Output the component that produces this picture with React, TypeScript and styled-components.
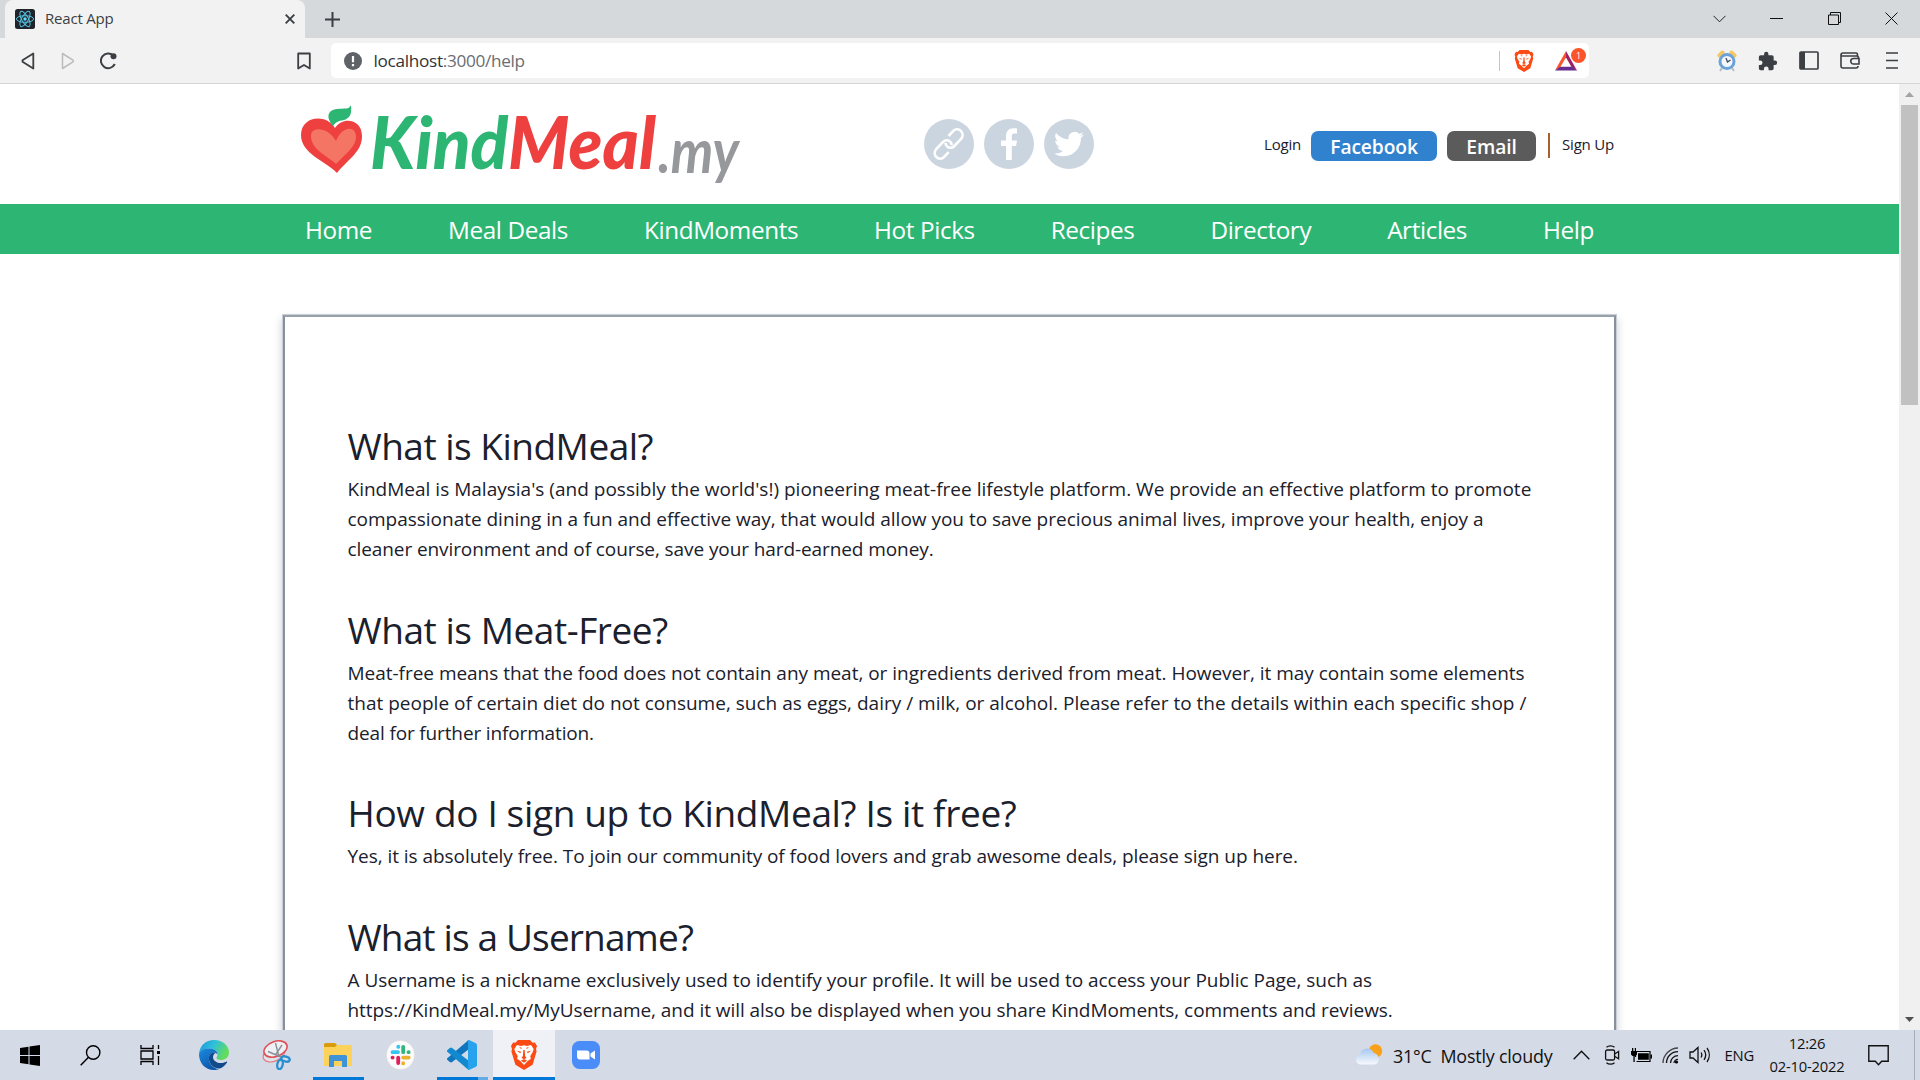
import React from 'react';
import styled, { createGlobalStyle } from 'styled-components';

const Global = createGlobalStyle`
  * { box-sizing: border-box; }
  html, body { margin: 0; padding: 0; overflow: hidden; background: #fff; }
  body { font-family: "Open Sans", "Noto Sans", sans-serif; color: #1a202c; }
  p, h2 { margin: 0; font-weight: 400; }
  svg { display: block; flex: none; }
`;

const Screen = styled.div`
  width: 1920px; height: 1080px; overflow: hidden;
  display: flex; flex-direction: column;
`;

/* ---------- browser chrome ---------- */
const TabStrip = styled.div`
  height: 38px; flex: none; background: #d5d9dc;
  display: flex; align-items: stretch; padding-left: 5px;
`;
const Tab = styled.div`
  width: 300px; background: #f2f2f2; border-radius: 8px 8px 0 0;
  display: flex; align-items: center; padding: 0 10px 0 10px; gap: 10px;
`;
const TabTitle = styled.span`
  flex: 1; font-size: 15px; letter-spacing: -0.2px; color: #3b3e42; padding-bottom: 2px;
`;
const NewTab = styled.div`
  display: flex; align-items: center; padding-left: 20px; flex: 1;
`;
const WindowControls = styled.div`
  display: flex; align-items: center; gap: 44.3px; padding: 0 22px 1px 0;
`;
const Toolbar = styled.div`
  height: 46px; flex: none; background: #f2f2f2; border-bottom: 1px solid #d4d5d6;
  display: flex; align-items: center; padding: 0 22px 0 21px;
`;
const NavButtons = styled.div`
  display: flex; align-items: center; gap: 25.5px; width: 290px;
`;
const Bookmark = styled.div`margin-left: auto;`;
const AddressBar = styled.div`
  width: 1258px; height: 35px; margin-left: 20px; background: #fff; border-radius: 5px;
  display: flex; align-items: center; padding: 0 2px 0 13px; 
`;
const Url = styled.span`
  flex: 1; margin-left: 11.5px; font-size: 17.2px; letter-spacing: -0.31px; color: #303337; padding-bottom: 1px;
  em { font-style: normal; color: #6a6d71; }
`;
const UrlRule = styled.span`width: 1px; height: 20px; background: #c3c5c8; margin-right: 14px;`;
const Rewards = styled.div`position: relative; width: 33px; height: 26px; margin-left: 20px;`;
const Badge = styled.span`
  position: absolute; left: 17px; top: 0; width: 15px; height: 15px; border-radius: 8px;
  background: #fb542b; color: #fff; font-size: 9px; line-height: 15px; text-align: center;
`;
const Tools = styled.div`
  display: flex; align-items: center; gap: 21px; margin-left: auto;
  > :last-child { margin-left: 5px; }
`;

/* ---------- page ---------- */
const Viewport = styled.div`flex: 1; min-height: 0; display: flex;`;
const Page = styled.main`flex: 1; overflow: hidden; background: #fff;`;
const Scrollbar = styled.div`
  width: 21px; background: #f0f0f0; display: flex; flex-direction: column; align-items: center;
`;
const ScrollArrow = styled.div`height: 21px; display: flex; align-items: center;`;
const Thumb = styled.div`width: 17px; height: 300px; background: #c1c1c1; margin-bottom: auto;`;

const Header = styled.header`
  height: 120px; display: flex; align-items: center; padding: 0 285px 0 300px;
`;
const Social = styled.div`display: flex; gap: 10px; margin-left: 174px;`;
const Circle = styled.div`
  width: 50px; height: 50px; border-radius: 50%; background: #cbd5e0;
  display: flex; align-items: center; justify-content: center;
`;
const Account = styled.div`
  display: flex; align-items: center; margin-left: auto; padding-top: 3px;
`;
const SmallLink = styled.a`font-size: 15px; letter-spacing: -0.2px; padding-bottom: 3px;`;
const Pill = styled.button<{ $bg: string; $w: number }>`
  width: ${p => p.$w}px; height: 30px; border: 0; border-radius: 7px; padding: 1px 0 0;
  background: ${p => p.$bg}; color: #fff; margin-left: 10px;
  font: 600 19.2px/29px "Open Sans", sans-serif; letter-spacing: -0.1px;
`;
const Divider = styled.span`
  width: 2px; height: 25px; background: #a5622f; margin: 0 12px;
`;
const MainNav = styled.nav`
  height: 50px; background: #2db673; display: flex; align-items: center;
  justify-content: space-between; padding: 2px 305px 0 305px;
`;
const NavLink = styled.a`color: #fff; font-size: 24.3px; line-height: 48px; letter-spacing: -0.4px;`;

const Panel = styled.section`
  margin: 61px 283px 0 283px; height: 900px; border: 2px solid #87919b; border-top-color: #98a1aa;
  box-shadow: 0 0 0 1px #c9ced6, 0 5px 8px 1px rgba(60, 72, 88, 0.28);
  padding: 101px 60px 0 62.5px; background: #fff;
`;
const Entry = styled.article`margin-bottom: 37.5px;`;
const Question = styled.h2<{ $ls: number }>`
  font-size: 37px; line-height: 54px; padding: 1px 0; white-space: nowrap;
  letter-spacing: ${p => p.$ls}px;
`;
const Line = styled.span<{ $ls: number }>`
  display: block; font-size: 19px; line-height: 30px; white-space: nowrap;
  letter-spacing: ${p => p.$ls}px;
`;

/* ---------- taskbar ---------- */
const Taskbar = styled.footer`
  height: 50px; flex: none; background: #d5dae7; display: flex; padding-right: 5px; color: #111;
`;
const System = styled.div`
  display: flex; width: 183px; 
  > * { width: 60px; display: flex; align-items: center; justify-content: center; }
`;
const AppCell = styled.div<{ $active?: boolean; $mark?: string }>`
  width: 62px; display: flex; align-items: center; justify-content: center; position: relative;
  background: ${p => (p.$active ? '#eff1f7' : 'transparent')};
  &::after {
    content: ''; position: absolute; bottom: 0; height: 3px; left: ${p => (p.$active ? 0 : 6)}px;
    right: ${p => (p.$active ? 0 : 5)}px; background: ${p => p.$mark || 'transparent'};
  }
`;
const Tray = styled.div`
  margin-left: auto; display: flex; align-items: center; border-right: 1px solid #a9aebb; padding-right: 25px;
`;
const Weather = styled.div`
  display: flex; align-items: center; gap: 10px; font-size: 17.9px; letter-spacing: -0.2px; margin-right: 21px;
  white-space: nowrap;
  span { padding-top: 2px; }
`;
const TrayIcons = styled.div`
  display: flex; align-items: center; gap: 10px;
  > :first-child { margin-right: 4px; }
`;
const Lang = styled.span`font-size: 14.8px; margin: 0 14px 0 13px; letter-spacing: -0.2px;`;
const Clock = styled.div`
  width: 78px; font-size: 14.8px; line-height: 23px; letter-spacing: -0.2px; text-align: center; margin-right: 22px; white-space: nowrap;
`;

const Lion = ({ w, h }: { w: number; h: number }) => (
  <svg width={w} height={h} viewBox="0 0 26 30">
    <path d="M7 0h12l2.6 2.8 2.3-.3L26 6l-1 3 .6 2.5-4 13.3L13 30 4.4 24.8.4 11.5 1 9 0 6l2.1-3.5 2.3.3z" fill="#fb4a14" />
    <path d="M6 5l4 1 3-.8 3 .8 4-1 2.7 4-1 3-2.5 4.2.7 2.5-3.2 2.4L13 25l-3.7-3.9-3.2-2.4.7-2.5L4.3 12l-1-3z" fill="#fff" />
    <path d="M5.4 10.5l4.8 1.3-1 1.5zM20.6 10.5l-4.8 1.3 1 1.5zM12.3 10h1.4l.4 6 1.4 1.8L13 19.4l-2.5-1.6 1.4-1.8zM9.8 20.5L13 19.3l3.2 1.2L13 22.8zM8 6.800l3 1.200-1 1zM18 6.800L15 8l1 1z" fill="#fb4a14" />
  </svg>
);

const Logo = () => (
  <svg width="450" height="120" viewBox="300 84 450 120">
    <path d="M337 173C326 161 301 154 301 135c0-19 25-22 34-7 8-12 27-9 27 8 0 16-13 22-25 37z" fill="#ef4040" />
    <path d="M336 164c-8-8-25-14-25-28 0-10 17-9 25 5 6-15 20-16 20-4 0 10-11 17-20 27z" fill="#f47564" />
    <path d="M333 126c-7-8-6-16 4-17 8-1 12 1 14-4 1 9-1 13-7 15-6 1-8 2-11 6z" fill="#2db673" />
    <text x="370" y="169" fontFamily="Lato" fontWeight="900" fontStyle="italic" fontSize="73" textLength="286" lengthAdjust="spacingAndGlyphs">
      <tspan fill="#2db673">Kind</tspan><tspan fill="#ef4040">Meal</tspan>
    </text>
    <text x="658" y="173" fontFamily="Lato" fontWeight="700" fontStyle="italic" fontSize="62" fill="#96989b" textLength="81" lengthAdjust="spacingAndGlyphs">.my</text>
  </svg>
);

type Faq = { q: string; ls: number; a: [string, number][] };
const faq: Faq[] = [
  { q: 'What is KindMeal?', ls: -0.5, a: [
    ["KindMeal is Malaysia's (and possibly the world's!) pioneering meat-free lifestyle platform. We provide an effective platform to promote", 0.01],
    ['compassionate dining in a fun and effective way, that would allow you to save precious animal lives, improve your health, enjoy a', -0.015],
    ['cleaner environment and of course, save your hard-earned money.', -0.09]] },
  { q: 'What is Meat-Free?', ls: -0.45, a: [
    ['Meat-free means that the food does not contain any meat, or ingredients derived from meat. However, it may contain some elements', -0.025],
    ['that people of certain diet do not consume, such as eggs, dairy / milk, or alcohol. Please refer to the details within each specific shop /', 0.005],
    ['deal for further information.', -0.14]] },
  { q: 'How do I sign up to KindMeal? Is it free?', ls: -0.35, a: [
    ['Yes, it is absolutely free. To join our community of food lovers and grab awesome deals, please sign up here.', -0.05]] },
  { q: 'What is a Username?', ls: -0.85, a: [
    ['A Username is a nickname exclusively used to identify your profile. It will be used to access your Public Page, such as', -0.025],
    ['https://KindMeal.my/MyUsername, and it will also be displayed when you share KindMoments, comments and reviews.', -0.05]] },
];

const links = ['Home', 'Meal Deals', 'KindMoments', 'Hot Picks', 'Recipes', 'Directory', 'Articles', 'Help'];

const App = () => (
  <Screen>
    <Global />
    <TabStrip>
      <Tab>
        <svg width="20" height="20" viewBox="0 0 20 20">
          <rect width="20" height="20" rx="2.5" fill="#20232a" />
          <g fill="none" stroke="#53c1de" strokeWidth="1">
            <ellipse cx="10" cy="10" rx="8.6" ry="3.3" />
            <ellipse cx="10" cy="10" rx="8.6" ry="3.3" transform="rotate(60 10 10)" />
            <ellipse cx="10" cy="10" rx="8.6" ry="3.3" transform="rotate(120 10 10)" />
          </g>
          <circle cx="10" cy="10" r="1.7" fill="#61dafb" />
        </svg>
        <TabTitle>React App</TabTitle>
        <svg width="10" height="10" viewBox="0 0 10 10"><path d="M.7.7l8.6 8.6M9.3.7L.7 9.3" stroke="#3b3e42" strokeWidth="1.9" /></svg>
      </Tab>
      <NewTab>
        <svg width="15" height="15" viewBox="0 0 15 15"><path d="M7.5 0v15M0 7.5h15" stroke="#3b3e42" strokeWidth="2" /></svg>
      </NewTab>
      <WindowControls>
        <svg width="13" height="8" viewBox="0 0 13 8"><path d="M.5.8l6 6 6-6" fill="none" stroke="#222" /></svg>
        <svg width="13" height="13" viewBox="0 0 13 13"><path d="M0 6.5h13" stroke="#111" /></svg>
        <svg width="13" height="13" viewBox="0 0 13 13"><path d="M.5 3h10v9.5H.5zM2.5 3V.5h10v10h-2" fill="none" stroke="#111" /></svg>
        <svg width="13" height="13" viewBox="0 0 13 13"><path d="M.5.5l12 12M12.5.5l-12 12" stroke="#111" /></svg>
      </WindowControls>
    </TabStrip>
    <Toolbar>
      <NavButtons>
        <svg width="14" height="18" viewBox="0 0 14 18"><path d="M12.3 1.5v15L1.5 9.7v-1.4z" fill="none" stroke="#3b3e42" strokeWidth="1.8" strokeLinejoin="round" /></svg>
        <svg width="14" height="18" viewBox="0 0 14 18"><path d="M1.5 1.5v15l10.8-6.8v-1.4z" fill="none" stroke="#b9bbbd" strokeWidth="1.5" strokeLinejoin="round" /></svg>
        <svg width="18" height="18" viewBox="0.8 0 18 18"><path d="M14 3.5A7.3 7.3 0 1 0 15.6 12" fill="none" stroke="#3b3e42" strokeWidth="2" /><circle cx="14.3" cy="4.2" r="3" fill="#3b3e42" /></svg>
        <Bookmark>
          <svg width="14" height="18" viewBox="0 0 14 18"><path d="M1.2 1.2h11.6v15L7 12.6l-5.8 3.6z" fill="none" stroke="#3b3e42" strokeWidth="1.8" strokeLinejoin="round" transform="translate(0 .3)" /></svg>
        </Bookmark>
      </NavButtons>
      <AddressBar>
        <svg width="18" height="18" viewBox="0 0 18 18"><circle cx="9" cy="9" r="9" fill="#5f6368" /><path d="M9 4v6.2M9 12v2.2" stroke="#fff" strokeWidth="2.2" /></svg>
        <Url>localhost<em>:3000/help</em></Url>
        <UrlRule />
        <Lion w={20} h={22} />
        <Rewards>
          <svg width="24" height="26" viewBox="0 0 24 26">
            <path d="M12 3v6.5L6.3 19 1 22.5z" fill="#fb542b" />
            <path d="M12 3l11 19.5L17.5 19 12 9.5z" fill="#9e1f63" />
            <path d="M1 22.5L6 18.7h12l5 3.8z" fill="#662d91" />
          </svg>
          <Badge>1</Badge>
        </Rewards>
      </AddressBar>
      <Tools>
        <svg width="20" height="22" viewBox="0 0 20 22">
          <path d="M5 18l-2 3M15 18l2 3" stroke="#b9bdc1" strokeWidth="2" />
          <path d="M2.5 5.5l3-3M17.5 5.5l-3-3" stroke="#f3c764" strokeWidth="4" strokeLinecap="round" />
          <circle cx="10" cy="11.5" r="7" fill="#f4f8fc" stroke="#6ba3d9" strokeWidth="3" />
          <path d="M9 8l1.5 4 3-2" fill="none" stroke="#445" strokeWidth="1.3" />
        </svg>
        <svg width="20" height="20" viewBox="1 0 23 23"><path d="M20.5 11H19V7a2 2 0 0 0-2-2h-4V3.5a2.5 2.5 0 0 0-5 0V5H4a2 2 0 0 0-2 2v3.8h1.5a2.7 2.7 0 0 1 0 5.4H2V20a2 2 0 0 0 2 2h3.8v-1.5a2.7 2.7 0 0 1 5.4 0V22H17a2 2 0 0 0 2-2v-4h1.5a2.5 2.5 0 0 0 0-5z" fill="#3b3e42" /></svg>
        <svg width="20" height="19" viewBox="0 0 20 19"><rect x="1" y="1" width="18" height="17" rx="1" fill="none" stroke="#3b3e42" strokeWidth="1.7" /><path d="M1 1h5v17H1z" fill="#3b3e42" /></svg>
        <svg width="20" height="17" viewBox="0 0 20 17"><path d="M17.5 5V2.5A1.5 1.5 0 0 0 16 1H3a2 2 0 0 0-2 2v11a2 2 0 0 0 2 2h13a2 2 0 0 0 2-2M1 4h15.5a2 2 0 0 1 2 2M19 6.5h-5.5a2.7 2.7 0 0 0 0 5.5H19z" fill="none" stroke="#3b3e42" strokeWidth="1.6" /></svg>
        <svg width="12" height="17" viewBox="0 0 12 17"><path d="M0 1h12M0 8.5h12M0 16h12" stroke="#3b3e42" strokeWidth="1.7" /></svg>
      </Tools>
    </Toolbar>

    <Viewport>
      <Page>
        <Header>
          <Logo />
          <Social>
            <Circle>
              <svg width="32" height="34" viewBox="0 0 32 34">
                <g fill="none" stroke="#fff" strokeWidth="2.6" transform="translate(-1 0)">
                  <path d="M16.5 9l4.6-4.9a5.3 5.3 0 0 1 8 0c2 2.2 2 5.5 0 7.7l-6.6 7.1a5 5 0 0 1-7.5.4c-.9-.9-1.4-2-1.5-3.3" />
                  <path d="M16.7 25.2l-4.5 4.7a5.3 5.3 0 0 1-8 0c-2-2.2-2-5.5 0-7.7l6.6-7a5 5 0 0 1 7.5-.4c.9.9 1.4 2 1.5 3.3" />
                </g>
              </svg>
            </Circle>
            <Circle>
              <svg width="16" height="32" viewBox="0 0 16 32"><path d="M5 32V18H0v-5.5h5V8.3C5 3 8 .2 12.5.2c1.8 0 3.5.2 3.5.2v5h-2.7c-1.9 0-2.5 1.1-2.5 2.5v4.6H16l-.9 5.5h-4.3v14z" fill="#fff" /></svg>
            </Circle>
            <Circle>
              <svg width="30" height="30" viewBox="0 0 24 24"><path d="M23.95 4.57a10 10 0 0 1-2.82.77 4.96 4.96 0 0 0 2.16-2.72c-.95.55-2 .95-3.13 1.18a4.92 4.92 0 0 0-8.38 4.48C7.69 8.09 4.07 6.13 1.64 3.16a4.93 4.93 0 0 0 1.52 6.57 4.9 4.9 0 0 1-2.23-.61v.06c0 2.38 1.7 4.37 3.95 4.82a5 5 0 0 1-2.21.09 4.94 4.94 0 0 0 4.6 3.42A9.87 9.87 0 0 1 0 19.54a13.99 13.99 0 0 0 7.55 2.21c9.05 0 14-7.5 14-13.98l-.02-.64a9.94 9.94 0 0 0 2.42-2.56z" fill="#fff" /></svg>
            </Circle>
          </Social>
          <Account>
            <SmallLink>Login</SmallLink>
            <Pill $bg="#3182ce" $w={126}>Facebook</Pill>
            <Pill $bg="#5b5b5b" $w={89}>Email</Pill>
            <Divider />
            <SmallLink>Sign Up</SmallLink>
          </Account>
        </Header>
        <MainNav>{links.map(l => <NavLink key={l}>{l}</NavLink>)}</MainNav>
        <Panel>
          {faq.map(f => (
            <Entry key={f.q}>
              <Question $ls={f.ls}>{f.q}</Question>
              <p>{f.a.map(([t, ls]) => <Line key={t} $ls={ls}>{t}</Line>)}</p>
            </Entry>
          ))}
        </Panel>
      </Page>
      <Scrollbar>
        <ScrollArrow><svg width="9" height="5" viewBox="0 0 9 5"><path d="M0 5l4.5-5L9 5z" fill="#a3a3a3" /></svg></ScrollArrow>
        <Thumb />
        <ScrollArrow><svg width="9" height="5" viewBox="0 0 9 5"><path d="M0 0l4.5 5L9 0z" fill="#505050" /></svg></ScrollArrow>
      </Scrollbar>
    </Viewport>

    <Taskbar>
      <System>
        <div><svg width="20" height="21" viewBox="0 0 20 21"><path d="M0 3l8.5-1.2V10H0zM9.5 1.6L20 0v10H9.5zM0 11h8.5v8.2L0 18zM9.5 11H20v10L9.5 19.4z" fill="#000" /></svg></div>
        <div><svg width="21" height="21" viewBox="0 0 21 21"><circle cx="13.2" cy="7.5" r="6.7" fill="none" stroke="#000" strokeWidth="1.4" /><path d="M8.5 12.3L.7 20.3" stroke="#000" strokeWidth="1.5" /></svg></div>
        <div><svg width="21" height="20" viewBox="0 0 21 20"><path d="M1 0v3.5h12V0M1 20v-3.5h12V20M1 6h12v8H1zM18.5 0v4M18.5 11v9" fill="none" stroke="#000" strokeWidth="1.3" /><path d="M17 6h3v3h-3z" /></svg></div>
      </System>
      <AppCell>
        <svg width="30" height="30" viewBox="0 0 30 30">
          <defs>
            <linearGradient id="eg" x1="0" y1="0" x2="1" y2=".4"><stop offset="0" stopColor="#1b8fd8" /><stop offset=".5" stopColor="#2fc0dc" /><stop offset="1" stopColor="#63dc5c" /></linearGradient>
            <linearGradient id="eb" x1="0" y1="0" x2=".6" y2="1"><stop offset="0" stopColor="#1a8be0" /><stop offset="1" stopColor="#0d55a8" /></linearGradient>
          </defs>
          <path d="M0 14C1 5 7 0 15 0c9 0 15 6 15 12.5 0 5-4 7.5-8 7.5-3 0-5-1-4.5-2.5.5-1 1-1.5 1-3C18.5 11 15 8.5 10.5 8.5 5 8.5 1 11 0 14z" fill="url(#eg)" />
          <path d="M0 14c1-3.5 5-5.5 10.5-5.5 4.5 0 8 2.5 8 6-2-3-7.5-2.5-8.5 2.5-1 6 4 12 10 12-1.5.7-3 1-5 1C6 30 0 23 0 14z" fill="url(#eb)" />
          <path d="M10 17c-1 7 5 12 11 11.5 3-1 5.5-3.5 7-6 .4-.8-.2-1.2-.8-.8C21 25 14 22 14 17c0-2 1.5-3.5 2.5-4-3-.8-6 .8-6.5 4z" fill="#114a8b" />
        </svg>
      </AppCell>
      <AppCell>
        <svg width="29" height="30" viewBox="0 0 29 30">
          <ellipse cx="12" cy="14" rx="11.5" ry="7" transform="rotate(-25 12 14)" fill="#dfe3ea" stroke="#e37b80" strokeWidth="1.2" />
          <ellipse cx="13.5" cy="9" rx="12" ry="7.5" transform="rotate(-20 13.5 9)" fill="#edf0f4" stroke="#df4f55" strokeWidth="1.6" />
          <path d="M13.5 3l3.5 14M6 11.5L19 17M20 5l-6 9" stroke="#8b9096" strokeWidth="1.4" />
          <ellipse cx="23.5" cy="19" rx="4.3" ry="2.5" transform="rotate(15 23.5 19)" fill="none" stroke="#2a8fd0" strokeWidth="2.3" />
          <ellipse cx="18" cy="24.5" rx="2.7" ry="4.7" transform="rotate(12 18 24.5)" fill="none" stroke="#2a8fd0" strokeWidth="2.3" />
        </svg>
      </AppCell>
      <AppCell $mark="#0078d7">
        <svg width="28" height="24" viewBox="0 0 28 24">
          <path d="M0 1.5A1.5 1.5 0 0 1 1.5 0H11l2 2v3H0z" fill="#d99a0b" />
          <path d="M0 4h11l2-2h13.5A1.5 1.5 0 0 1 28 3.5V23H0z" fill="#fdd25b" />
          <path d="M5 24V13.5a1.5 1.5 0 0 1 1.5-1.5h15a1.5 1.5 0 0 1 1.5 1.5V24h-5v-6h-8v6z" fill="#3d93d6" />
        </svg>
      </AppCell>
      <AppCell>
        <svg width="29" height="30" viewBox="0 0 29 30">
          <ellipse cx="14.5" cy="15" rx="14.2" ry="14.7" fill="#fbfbfb" stroke="#d2d2d2" strokeWidth=".6" />
          <g strokeWidth="3.8" strokeLinecap="round">
            <path d="M6.5 12.2h5.5M12.3 6.6v.3" stroke="#36c5f0" />
            <path d="M17.2 6.8v5.4M22.5 12.2h.2" stroke="#2eb67d" />
            <path d="M12.2 17.6v5.4M6.5 17.6h.2" stroke="#e01e5a" />
            <path d="M17.2 17.6h5.5M17.2 23.2v.2" stroke="#ecb22e" />
          </g>
        </svg>
      </AppCell>
      <AppCell $mark="linear-gradient(90deg, #0078d7 80%, #62abe6 80%)">
        <svg width="30" height="30" viewBox="0 0 30 30">
          <path d="M22 0v9L4.5 22.5 2.7 22 0 19.5v-1L21 .5z" fill="#0f76bd" />
          <path d="M22 30v-9L4.5 7.5 2.7 8 0 10.5v1L21 29.5z" fill="#1389d0" />
          <path d="M22 0l7 3.2 1 1.5v20.6l-1 1.5L22 30l-1-.5V.5z" fill="#27a3ee" />
        </svg>
      </AppCell>
      <AppCell $active $mark="#0078d7"><Lion w={26} h={30} /></AppCell>
      <AppCell>
        <svg width="28" height="28" viewBox="0 0 28 28"><rect width="28" height="28" rx="7.5" fill="#4a8cf8" /><path d="M5 9.5h9.5a3 3 0 0 1 3 3v6H8a3 3 0 0 1-3-3zM18.5 12.5l4.5-3v9l-4.5-3z" fill="#fff" /></svg>
      </AppCell>
      <Tray>
        <Weather>
          <svg width="28" height="22" viewBox="0 0 28 22">
            <defs><linearGradient id="cl" x1="0" y1="0" x2="0" y2="1"><stop offset="0" stopColor="#a8c8f0" /><stop offset="1" stopColor="#f7f9fd" /></linearGradient></defs>
            <circle cx="20.5" cy="7" r="6.7" fill="#f9a11b" />
            <path d="M5 20.5a5 5 0 0 1-.5-9.7A7.5 7.5 0 0 1 18.7 9 6 6 0 0 1 20 20.5z" fill="url(#cl)" />
          </svg>
          <span>31°C&nbsp; Mostly cloudy</span>
        </Weather>
        <TrayIcons>
          <svg width="17" height="10" viewBox="0 0 17 10"><path d="M.7 9.3l7.8-8 7.8 8" fill="none" stroke="#111" strokeWidth="1.4" /></svg>
          <svg width="17" height="20" viewBox="0 0 17 20"><rect x="1.6" y="5" width="9" height="10" rx="1.5" fill="none" stroke="#111" strokeWidth="1.3" /><path d="M10.6 9l4-2.5v7.3l-4-2.5M2.5 2.3c2-1.8 6-1.8 8 0M2.5 17.7c2 1.8 6 1.8 8 0" fill="none" stroke="#111" strokeWidth="1.3" /></svg>
          <svg width="21" height="15" viewBox="0 0 21 15"><path d="M4.5 9V3.5h14.5v10H5.5" fill="none" stroke="#000" strokeWidth="1.2" /><path d="M7 5.2h10.8v6.6H7zM19.5 6.5H21v4h-1.5zM0 3h6v3.5L4.5 8h-3L0 6.5zM1 0h1.3v3H1zM3.8 0H5v3H3.8zM2.4 8h1.3v6H2.4z" /></svg>
          <svg width="17" height="17" viewBox="0 0 17 17"><g fill="none" stroke="#111" strokeWidth="1.3"><path d="M1 16C1 8 8 1 16 1" opacity=".75" /><path d="M4.5 16C4.5 9.5 9.5 4.7 16 4.7M8.5 16c0-4 3.3-7.3 7.5-7.3M12 16c0-2 1.8-3.7 4-3.7" /></g><circle cx="14.5" cy="15" r="1.6" /></svg>
          <svg width="22" height="18" viewBox="0 0 22 18"><path d="M1 6h3l5-4.5v15L4 12H1zM12 6.5c1 1.5 1 3.5 0 5M15 4.2c2 2.8 2 6.8 0 9.6M18 2c3 4.2 3 9.8 0 14" fill="none" stroke="#111" strokeWidth="1.3" /></svg>
        </TrayIcons>
        <Lang>ENG</Lang>
        <Clock>12:26<br />02-10-2022</Clock>
        <svg width="21" height="21" viewBox="0 0 21 21"><path d="M.8.8h19.4v15.4h-6.5l-3.2 3.5-3.2-3.5H.8z" fill="none" stroke="#111" strokeWidth="1.4" /></svg>
      </Tray>
    </Taskbar>
  </Screen>
);

export default App;
